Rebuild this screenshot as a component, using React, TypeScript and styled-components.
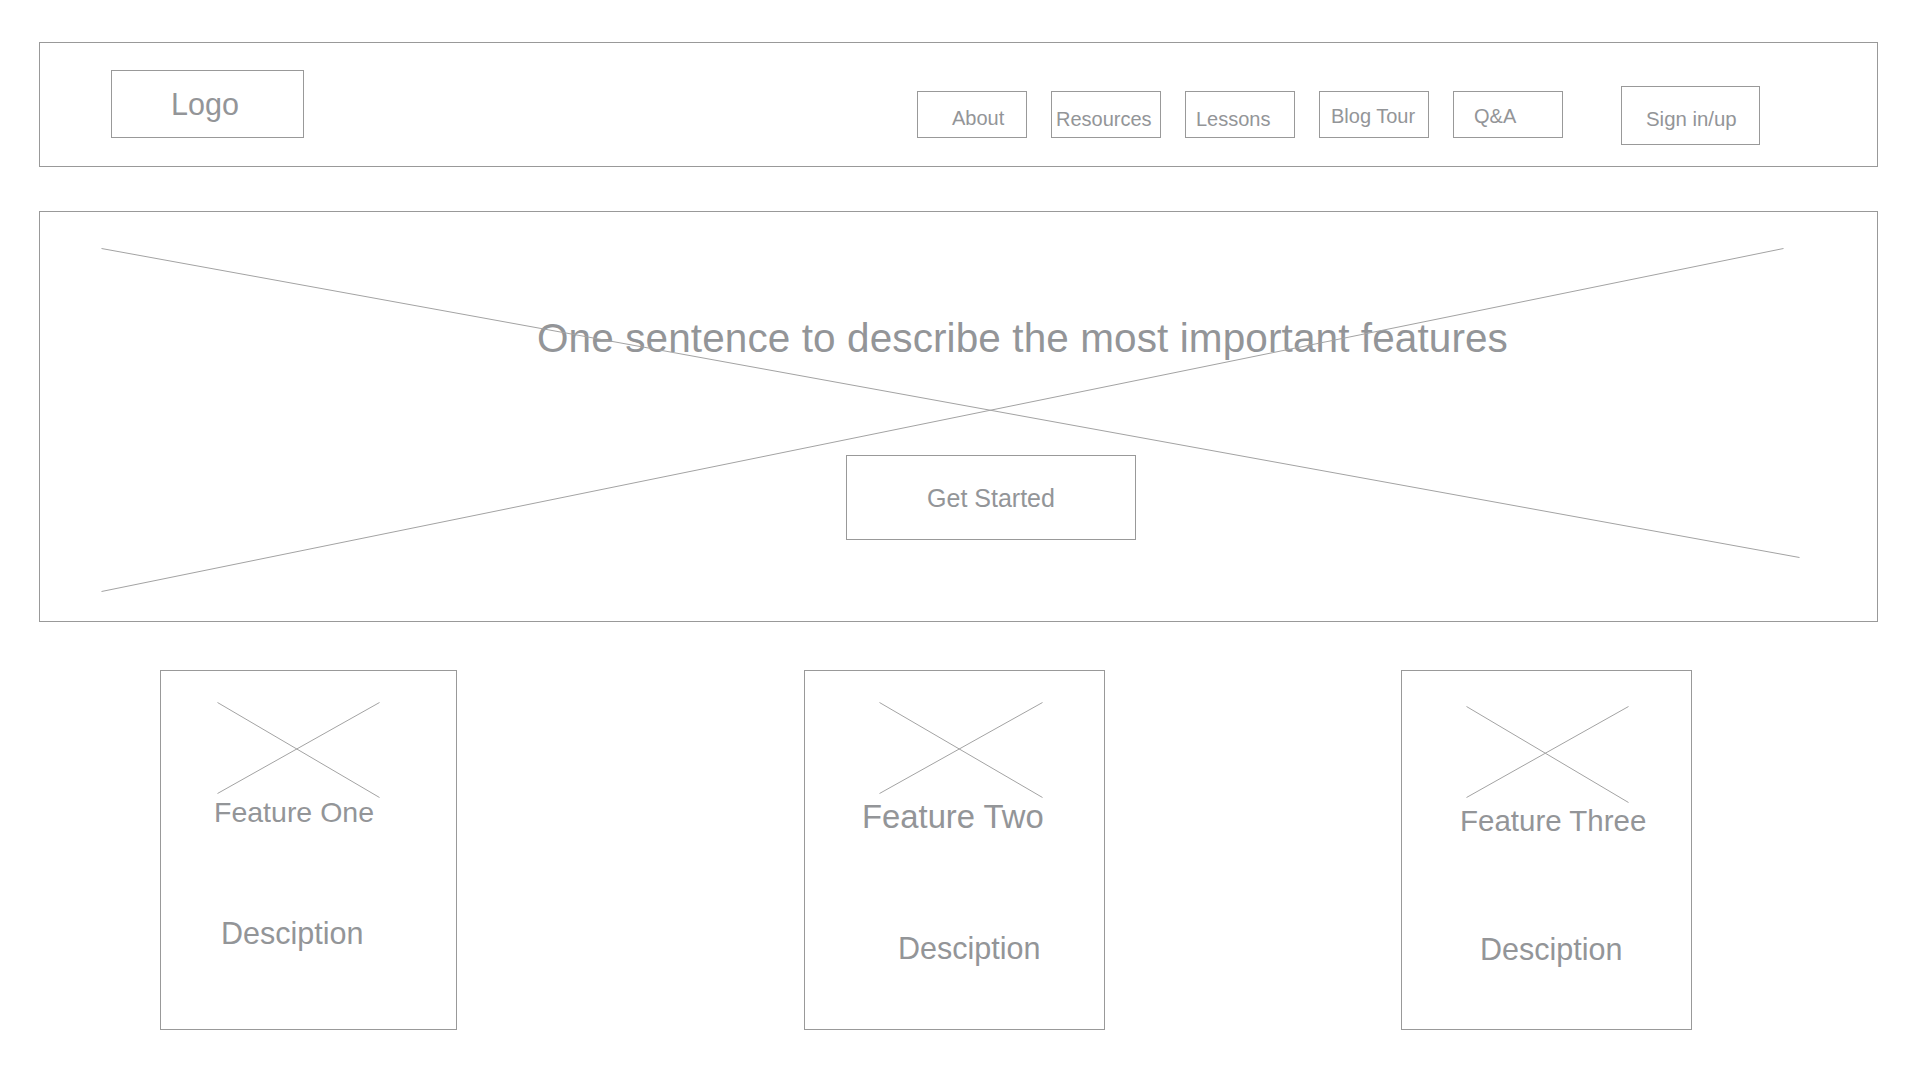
import React from "react";
import styled, { createGlobalStyle } from "styled-components";

const GlobalStyle = createGlobalStyle`
  html, body {
    margin: 0;
    padding: 0;
    background: #ffffff;
  }
  body {
    font-family: "Liberation Sans", Arial, sans-serif;
    color: #939598;
  }
  * { box-sizing: border-box; }
`;

const Page = styled.div`
  width: 1920px;
  height: 1080px;
  padding: 42px 42px 0 39px;
  display: flex;
  flex-direction: column;
  overflow: hidden;
`;

const Header = styled.header`
  height: 125px;
  border: 1px solid #999999;
  display: flex;
  align-items: flex-start;
  padding-left: 71px;
`;

const LogoBox = styled.div`
  margin-top: 27px;
  width: 193px;
  height: 68px;
  border: 1px solid #999999;
  display: flex;
  align-items: center;
  justify-content: center;
  padding-right: 5px;
  font-size: 30.5px;
  line-height: 1;
  color: #939598;
`;

const Nav = styled.nav`
  margin-left: 613px;
  margin-top: 48px;
  display: flex;
  gap: 24px;
`;

const NavButton = styled.div<{ $x: number; $y: number }>`
  width: 110px;
  height: 47px;
  border: 1px solid #999999;
  padding-left: ${(p) => p.$x}px;
  padding-top: ${(p) => p.$y}px;
  font-size: 20px;
  line-height: 1;
  white-space: nowrap;
  color: #939598;
`;

const SignButton = styled.div`
  margin-left: 58px;
  margin-top: 43px;
  width: 139px;
  height: 59px;
  border: 1px solid #999999;
  padding-left: 24px;
  padding-top: 22px;
  font-size: 20.4px;
  line-height: 1;
  white-space: nowrap;
  color: #939598;
`;

const Hero = styled.section`
  position: relative;
  margin-top: 44px;
  height: 411px;
  border: 1px solid #999999;
  display: flex;
  flex-direction: column;
  align-items: flex-start;
`;

const HeroCross = styled.svg`
  position: absolute;
  inset: 0;
  width: 100%;
  height: 100%;
  pointer-events: none;
`;

const Headline = styled.h1`
  margin: 106px 0 0 497px;
  font-size: 40.5px;
  letter-spacing: 0.1px;
  font-weight: 400;
  line-height: 1;
  white-space: nowrap;
  color: #939598;
`;

const CtaButton = styled.div`
  margin: 96px 0 0 806px;
  width: 290px;
  height: 85px;
  border: 1px solid #999999;
  display: flex;
  align-items: center;
  justify-content: center;
  padding-top: 3px;
  font-size: 25px;
  line-height: 1;
  color: #939598;
`;

const Features = styled.section`
  margin-top: 48px;
  display: flex;
  align-items: flex-start;
`;

const Card = styled.div<{ $offset: number; $w: number }>`
  margin-left: ${(p) => p.$offset}px;
  width: ${(p) => p.$w}px;
  height: 360px;
  border: 1px solid #999999;
  display: flex;
  flex-direction: column;
  align-items: flex-start;
`;

const Placeholder = styled.svg<{ $x: number; $y: number }>`
  display: block;
  margin-left: ${(p) => p.$x}px;
  margin-top: ${(p) => p.$y}px;
`;

const CardTitle = styled.h2<{ $x: number; $y: number; $size: number }>`
  margin: ${(p) => p.$y}px 0 0 ${(p) => p.$x}px;
  font-size: ${(p) => p.$size}px;
  font-weight: 400;
  line-height: 1;
  white-space: nowrap;
  color: #939598;
`;

const CardDesc = styled.p<{ $x: number; $y: number }>`
  margin: ${(p) => p.$y}px 0 0 ${(p) => p.$x}px;
  font-size: 30.5px;
  line-height: 1;
  white-space: nowrap;
  color: #939598;
`;

const LINE = "#a3a3a3";

const navItems = [
  { label: "About", x: 34, y: 16 },
  { label: "Resources", x: 4, y: 17 },
  { label: "Lessons", x: 10, y: 17 },
  { label: "Blog Tour", x: 11, y: 14 },
  { label: "Q&A", x: 20, y: 14 },
];

type Feature = {
  title: string;
  offset: number;
  w: number;
  ph: { x: number; y: number; w: number; h: number; a: [number, number, number, number]; b: [number, number, number, number] };
  t: { x: number; y: number; size: number };
  d: { x: number; y: number };
};

const features: Feature[] = [
  {
    title: "Feature One",
    offset: 121,
    w: 297,
    ph: { x: 56, y: 31, w: 163, h: 96, a: [0, 0, 162, 95], b: [0, 91, 162, 0] },
    t: { x: 53, y: 0, size: 28.5 },
    d: { x: 60, y: 91 },
  },
  {
    title: "Feature Two",
    offset: 347,
    w: 301,
    ph: { x: 74, y: 31, w: 164, h: 96, a: [0, 0, 163, 95], b: [0, 91, 163, 0] },
    t: { x: 57, y: 3, size: 32.8 },
    d: { x: 93, y: 99 },
  },
  {
    title: "Feature Three",
    offset: 296,
    w: 291,
    ph: { x: 64, y: 35, w: 163, h: 97, a: [0, 0, 162, 96], b: [0, 91, 162, 0] },
    t: { x: 58, y: 3, size: 29.5 },
    d: { x: 78, y: 98 },
  },
];

export default function App() {
  return (
    <>
      <GlobalStyle />
      <Page>
        <Header>
          <LogoBox>Logo</LogoBox>
          <Nav>
            {navItems.map((n) => (
              <NavButton key={n.label} $x={n.x} $y={n.y}>
                {n.label}
              </NavButton>
            ))}
          </Nav>
          <SignButton>Sign in/up</SignButton>
        </Header>

        <Hero>
          <Headline>One sentence to describe the most important features</Headline>
          <CtaButton>Get Started</CtaButton>
          <HeroCross viewBox="0 0 1837 409" preserveAspectRatio="none">
            <line x1="61.5" y1="36.5" x2="1759.5" y2="345.5" stroke={LINE} strokeWidth="1" />
            <line x1="61.5" y1="379.5" x2="1743.5" y2="36.5" stroke={LINE} strokeWidth="1" />
          </HeroCross>
        </Hero>

        <Features>
          {features.map((f) => (
            <Card key={f.title} $offset={f.offset} $w={f.w}>
              <Placeholder
                $x={f.ph.x}
                $y={f.ph.y}
                width={f.ph.w}
                height={f.ph.h}
                viewBox={`0 0 ${f.ph.w} ${f.ph.h}`}
              >
                <line x1={f.ph.a[0] + 0.5} y1={f.ph.a[1] + 0.5} x2={f.ph.a[2] + 0.5} y2={f.ph.a[3] + 0.5} stroke={LINE} strokeWidth="1" />
                <line x1={f.ph.b[0] + 0.5} y1={f.ph.b[1] + 0.5} x2={f.ph.b[2] + 0.5} y2={f.ph.b[3] + 0.5} stroke={LINE} strokeWidth="1" />
              </Placeholder>
              <CardTitle $x={f.t.x} $y={f.t.y} $size={f.t.size}>
                {f.title}
              </CardTitle>
              <CardDesc $x={f.d.x} $y={f.d.y}>
                Desciption
              </CardDesc>
            </Card>
          ))}
        </Features>
      </Page>
    </>
  );
}
